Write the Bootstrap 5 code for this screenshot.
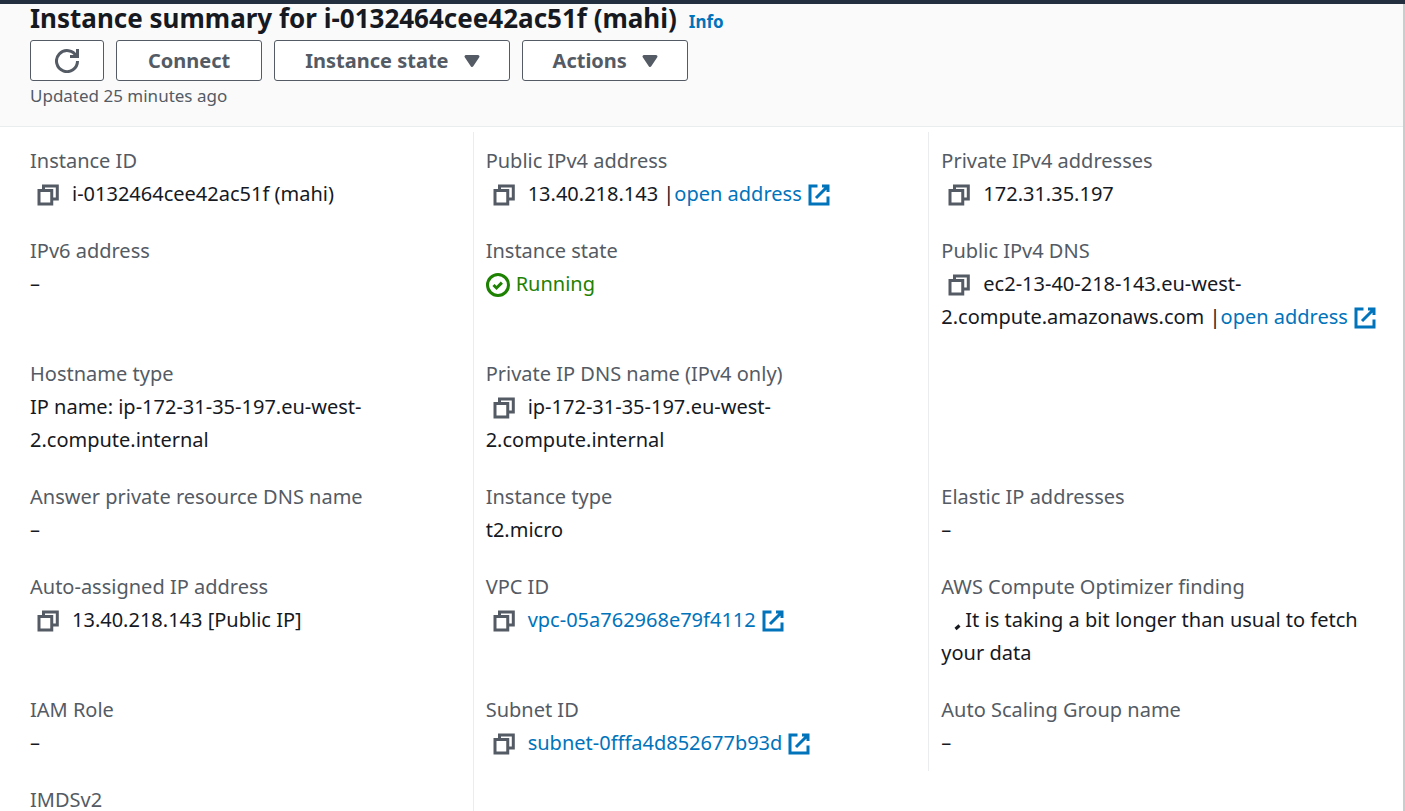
<!DOCTYPE html>
<html lang="en">
<head>
<meta charset="utf-8">
<meta name="viewport" content="width=device-width, initial-scale=1">
<title>Instance summary</title>
<link href="https://cdn.jsdelivr.net/npm/bootstrap@5.3.0/dist/css/bootstrap.min.css" rel="stylesheet">
<style>
  body { font-family: "Noto Sans", "Open Sans", sans-serif; font-size: 20px; line-height: 33px; color: #16191f; background: #fff; }
  .top-strip { height: 4px; background: #232f3e; }
  .panel { border-right: 2px solid #c8cdcd; }
  .panel-head { background: #fafafa; border-bottom: 1px solid #eaeded; padding: 0 30px 15px; }
  .panel-head h1 { font-size: 26px; line-height: 28px; }
  .info-link { font-size: 17px; line-height: 28px; color: #0073bb; }
  .buttons { gap: 12px; }
  .btn-console { display: flex; align-items: center; height: 41px; padding: 0 31px; border: 1px solid #545b64; border-radius: 3px; background: #fff; color: #545b64; font-size: 20px; line-height: 37px; font-weight: 700; }
  .btn-icon { padding: 0 24px; }
  .btn-drop { padding: 0 28px 0 30px; }
  .updated { font-size: 17px; line-height: 30px; color: #545b64; }
  .fields { padding: 5px 18px 0; }
  .field { padding: 12px 0 12px 12px; }
  .field.split { padding-right: 12px; border-right: 1px solid #eaeded; }
  .field dt { font-weight: 400; color: #545b64; }
  a { color: #0073bb; text-decoration: none; }
  .ico { width: 24px; height: 24px; fill: none; stroke: currentColor; stroke-width: 2; vertical-align: -6px; }
  .caret { width: 18px; margin-left: 14px; fill: currentColor; stroke-linejoin: round; }
  .copy { border: 0; background: none; padding: 0; margin: 0 12px 0 6px; color: #545b64; line-height: 24px; }
  .ext { margin-left: 5px; }
  .running { color: #1d8102; }
  .running .ico { margin-right: 6px; }
</style>
</head>
<body>
<svg class="d-none" aria-hidden="true">
  <symbol id="i-copy" viewBox="0 0 16 16"><path d="M2 5h8.5v9H2zM5 5V2h9.2v8.6h-3.7"/></symbol>
  <symbol id="i-ext" viewBox="0 0 16 16"><path d="M10 2h4v4M6 10l8-8M14 9.05V14H2V2h5"/></symbol>
  <symbol id="i-caret" viewBox="2 0 12 16"><path d="M4 5h8l-4 6z"/></symbol>
</svg>
<div class="vh-100 overflow-hidden d-flex flex-column">
  <div class="top-strip flex-shrink-0"></div>
  <main class="panel flex-grow-1">
    <header class="panel-head">
      <div class="d-flex align-items-baseline">
        <h1 class="fw-bold mb-0">Instance summary for i-0132464cee42ac51f (mahi)</h1>
        <a class="info-link fw-bold ms-2 ps-1" href="#">Info</a>
      </div>
      <div class="d-flex mt-1 buttons">
        <button type="button" class="btn btn-console btn-icon" aria-label="Refresh"><svg class="ico" viewBox="0 0 16 16"><path d="M10 5h5V0M15 8a7 7 0 1 1-.7-3"/></svg></button>
        <button type="button" class="btn btn-console">Connect</button>
        <button type="button" class="btn btn-console btn-drop">Instance state<svg class="ico caret"><use href="#i-caret"/></svg></button>
        <button type="button" class="btn btn-console btn-drop">Actions<svg class="ico caret"><use href="#i-caret"/></svg></button>
      </div>
      <div class="updated">Updated 25 minutes ago</div>
    </header>
    <div class="fields">
      <div class="row g-0">
        <dl class="field split col-4 mb-0"><dt>Instance ID</dt><dd class="mb-0"><button type="button" class="copy" aria-label="Copy instance ID"><svg class="ico"><use href="#i-copy"/></svg></button>i-0132464cee42ac51f (mahi)</dd></dl>
        <dl class="field split col-4 mb-0"><dt>Public IPv4 address</dt><dd class="mb-0"><button type="button" class="copy" aria-label="Copy public address"><svg class="ico"><use href="#i-copy"/></svg></button>13.40.218.143 |<a href="#">open address<svg class="ico ext"><use href="#i-ext"/></svg></a></dd></dl>
        <dl class="field col-4 mb-0"><dt>Private IPv4 addresses</dt><dd class="mb-0"><button type="button" class="copy" aria-label="Copy private address"><svg class="ico"><use href="#i-copy"/></svg></button>172.31.35.197</dd></dl>
      </div>
      <div class="row g-0">
        <dl class="field split col-4 mb-0"><dt>IPv6 address</dt><dd class="mb-0">–</dd></dl>
        <dl class="field split col-4 mb-0"><dt>Instance state</dt><dd class="mb-0 running"><svg class="ico" viewBox="0 0 16 16"><circle cx="8" cy="8" r="7"/><path d="M5 8l2 2 3.6-3.6"/></svg><span>Running</span></dd></dl>
        <dl class="field col-4 mb-0"><dt>Public IPv4 DNS</dt><dd class="mb-0"><button type="button" class="copy" aria-label="Copy public DNS"><svg class="ico"><use href="#i-copy"/></svg></button>ec2-13-40-218-143.eu-west-<wbr>2.compute.amazonaws.com |<a href="#">open address<svg class="ico ext"><use href="#i-ext"/></svg></a></dd></dl>
      </div>
      <div class="row g-0">
        <dl class="field split col-4 mb-0"><dt>Hostname type</dt><dd class="mb-0">IP name: ip-172-31-35-197.eu-west-<wbr>2.compute.internal</dd></dl>
        <dl class="field split col-4 mb-0"><dt>Private IP DNS name (IPv4 only)</dt><dd class="mb-0"><button type="button" class="copy" aria-label="Copy private DNS name"><svg class="ico"><use href="#i-copy"/></svg></button>ip-172-31-35-197.eu-west-<wbr>2.compute.internal</dd></dl>
      </div>
      <div class="row g-0">
        <dl class="field split col-4 mb-0"><dt>Answer private resource DNS name</dt><dd class="mb-0">–</dd></dl>
        <dl class="field split col-4 mb-0"><dt>Instance type</dt><dd class="mb-0">t2.micro</dd></dl>
        <dl class="field col-4 mb-0"><dt>Elastic IP addresses</dt><dd class="mb-0">–</dd></dl>
      </div>
      <div class="row g-0">
        <dl class="field split col-4 mb-0"><dt>Auto-assigned IP address</dt><dd class="mb-0"><button type="button" class="copy" aria-label="Copy assigned address"><svg class="ico"><use href="#i-copy"/></svg></button>13.40.218.143 [Public IP]</dd></dl>
        <dl class="field split col-4 mb-0"><dt>VPC ID</dt><dd class="mb-0"><button type="button" class="copy" aria-label="Copy VPC ID"><svg class="ico"><use href="#i-copy"/></svg></button><a href="#">vpc-05a762968e79f4112<svg class="ico ext"><use href="#i-ext"/></svg></a></dd></dl>
        <dl class="field col-4 mb-0"><dt>AWS Compute Optimizer finding</dt><dd class="mb-0"><svg class="ico" viewBox="0 0 24 24"><path stroke-width="3" d="M14.5 20l4-3.5"/></svg>It is taking a bit longer than usual to fetch your data</dd></dl>
      </div>
      <div class="row g-0">
        <dl class="field split col-4 mb-0"><dt>IAM Role</dt><dd class="mb-0">–</dd></dl>
        <dl class="field split col-4 mb-0"><dt>Subnet ID</dt><dd class="mb-0"><button type="button" class="copy" aria-label="Copy subnet ID"><svg class="ico"><use href="#i-copy"/></svg></button><a href="#">subnet-0fffa4d852677b93d<svg class="ico ext"><use href="#i-ext"/></svg></a></dd></dl>
        <dl class="field col-4 mb-0"><dt>Auto Scaling Group name</dt><dd class="mb-0">–</dd></dl>
      </div>
      <div class="row g-0">
        <dl class="field split col-4 mb-0"><dt>IMDSv2</dt></dl>
      </div>
    </div>
  </main>
</div>
<script src="https://cdn.jsdelivr.net/npm/bootstrap@5.3.0/dist/js/bootstrap.bundle.min.js"></script>
</body>
</html>
